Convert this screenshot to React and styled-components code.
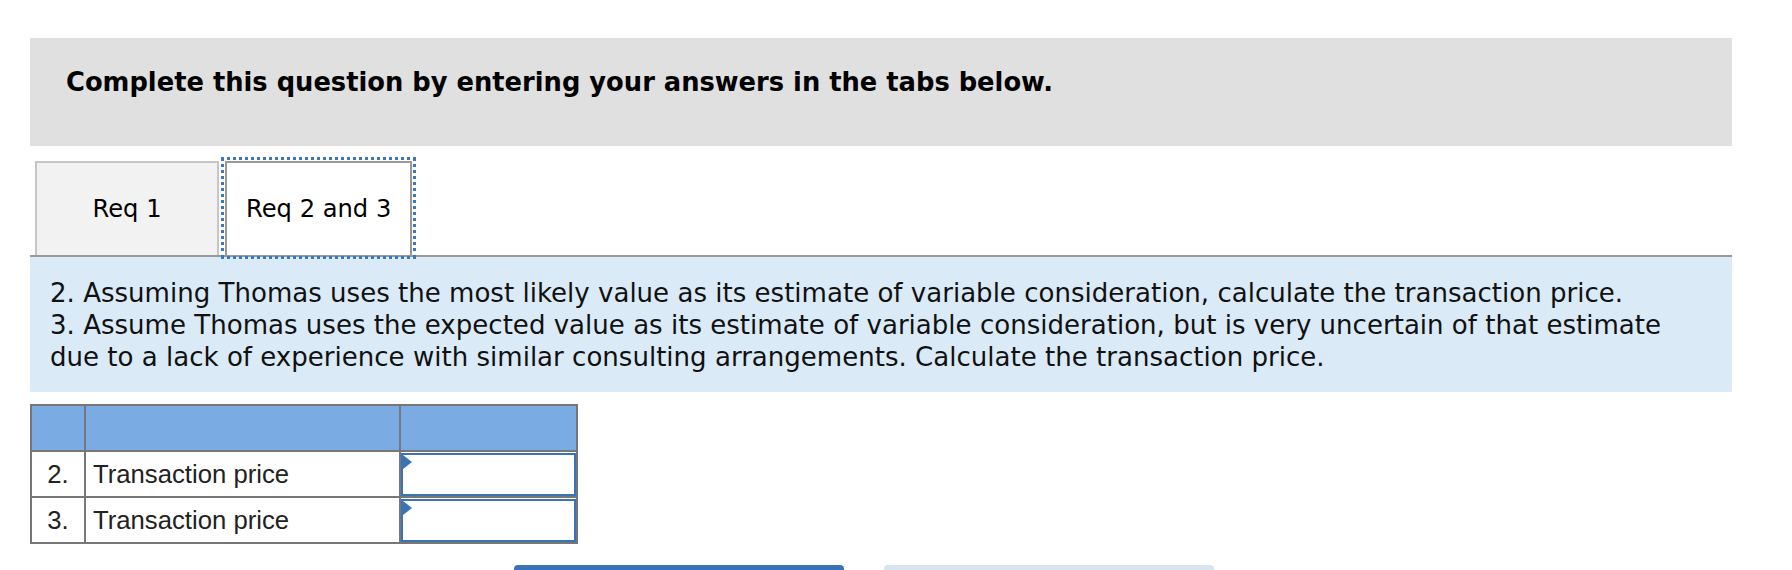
import React from 'react';
import styled, { createGlobalStyle } from 'styled-components';

const Global = createGlobalStyle`
  html, body { margin: 0; padding: 0; background: #fff; }
  body { font-family: "DejaVu Sans", Verdana, sans-serif; color: #000; }
`;

const Page = styled.div`
  padding: 38px 60px 0 30px;
`;

const Banner = styled.div`
  background: #e0e0e0;
  padding: 28px 36px 48px;
  font-weight: bold;
  font-size: 25.75px;
  line-height: 32px;
  color: #000;
`;

const TabBar = styled.div`
  display: flex;
  align-items: flex-end;
  gap: 6px;
  padding: 15px 0 0 5px;
  border-bottom: 2px solid #999;
`;

const Tab = styled.button`
  box-sizing: border-box;
  height: 94px;
  min-width: 184px;
  padding: 0 19px;
  font-family: "DejaVu Sans", Verdana, sans-serif;
  font-size: 24.2px;
  color: #000;
  cursor: pointer;
  background: ${(p) => (p.$active ? '#fff' : '#f2f2f2')};
  border: 2px solid ${(p) => (p.$active ? '#999' : '#c6c6c6')};
  border-bottom: none;
  outline: ${(p) => (p.$active ? '3px dotted #3b78c2' : 'none')};
  outline-offset: 1px;
`;

const Prompt = styled.div`
  background: #dbeaf7;
  padding: 20px 44px 19px 20px;
  font-size: 26.05px;
  line-height: 32px;
  color: #111;
`;

const Table = styled.table`
  margin-top: 12px;
  border-collapse: collapse;
  border: 2px solid #777;
  font-family: "Liberation Sans", Arial, sans-serif;
  font-size: 25.7px;
  color: #222;
`;

const HeadCell = styled.th`
  box-sizing: border-box;
  width: ${(p) => p.$w}px;
  height: 46px;
  padding: 0;
  background: #7aabe2;
  border: 2px solid #777;
`;

const NumCell = styled.td`
  height: 44px;
  padding: 0;
  text-align: center;
  border: 2px solid #777;
`;

const LabelCell = styled.td`
  height: 44px;
  padding: 0 7px;
  text-align: left;
  border: 2px solid #777;
`;

const InputCell = styled.td`
  position: relative;
  height: 44px;
  padding: 0;
  border: 2px solid #777;
`;

const AmountInput = styled.input`
  display: block;
  box-sizing: border-box;
  width: 100%;
  height: 43px;
  margin: 0;
  padding: 0 8px;
  border: 2px solid #3a73b8;
  background: #fff;
  font-family: "Liberation Sans", Arial, sans-serif;
  font-size: 22px;
  text-align: right;
  outline: none;
`;

const Flag = styled.span`
  position: absolute;
  left: 2px;
  top: 3px;
  width: 0;
  height: 0;
  border-top: 7px solid transparent;
  border-bottom: 7px solid transparent;
  border-left: 9px solid #3a73b8;
`;

const NavRow = styled.div`
  display: flex;
  gap: 40px;
  margin-top: 21px;
  padding-left: 484px;
`;

const NavButton = styled.button`
  width: 330px;
  height: 48px;
  border: none;
  border-radius: 4px;
  font-family: "DejaVu Sans", Verdana, sans-serif;
  font-size: 22px;
  background: ${(p) => (p.$primary ? '#3872b8' : '#d9e4f1')};
  color: ${(p) => (p.$primary ? '#fff' : '#8aa6c8')};
`;

const rows = [
  { n: '2.', label: 'Transaction price' },
  { n: '3.', label: 'Transaction price' },
];

export default function App() {
  return (
    <>
      <Global />
      <Page>
        <Banner>Complete this question by entering your answers in the tabs below.</Banner>
        <TabBar>
          <Tab>Req 1</Tab>
          <Tab $active>Req 2 and 3</Tab>
        </TabBar>
        <Prompt>
          2. Assuming Thomas uses the most likely value as its estimate of variable consideration, calculate the transaction price.
          <br />
          3. Assume Thomas uses the expected value as its estimate of variable consideration, but is very uncertain of that estimate due to a lack of experience with similar consulting arrangements. Calculate the transaction price.
        </Prompt>
        <Table>
          <thead>
            <tr>
              <HeadCell $w={54} />
              <HeadCell $w={315} />
              <HeadCell $w={177} />
            </tr>
          </thead>
          <tbody>
            {rows.map((r) => (
              <tr key={r.n}>
                <NumCell>{r.n}</NumCell>
                <LabelCell>{r.label}</LabelCell>
                <InputCell>
                  <AmountInput type="text" aria-label={r.label} />
                  <Flag />
                </InputCell>
              </tr>
            ))}
          </tbody>
        </Table>
        <NavRow>
          <NavButton $primary aria-label="Req 1" />
          <NavButton aria-label="Req 2 and 3" />
        </NavRow>
      </Page>
    </>
  );
}
